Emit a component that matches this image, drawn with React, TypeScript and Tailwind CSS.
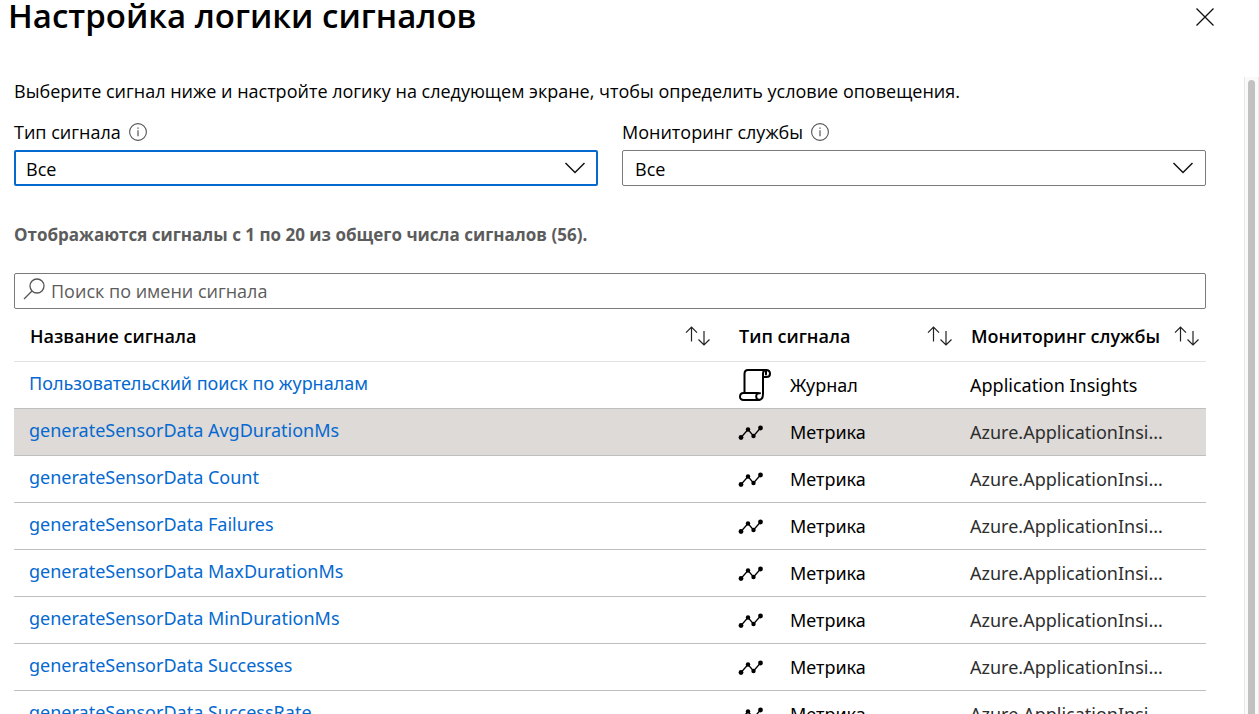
import { useState } from "react";

const signals = [
  { name: "Пользовательский поиск по журналам", type: "Журнал", service: "Application Insights" },
  { name: "generateSensorData AvgDurationMs", type: "Метрика", service: "Azure.ApplicationInsi..." },
  { name: "generateSensorData Count", type: "Метрика", service: "Azure.ApplicationInsi..." },
  { name: "generateSensorData Failures", type: "Метрика", service: "Azure.ApplicationInsi..." },
  { name: "generateSensorData MaxDurationMs", type: "Метрика", service: "Azure.ApplicationInsi..." },
  { name: "generateSensorData MinDurationMs", type: "Метрика", service: "Azure.ApplicationInsi..." },
  { name: "generateSensorData Successes", type: "Метрика", service: "Azure.ApplicationInsi..." },
  { name: "generateSensorData SuccessRate", type: "Метрика", service: "Azure.ApplicationInsi..." },
];

function InfoIcon() {
  return (
    <svg width="18" height="18" viewBox="0 0 18 18" fill="none" stroke="#555" aria-hidden="true">
      <circle cx="9" cy="9" r="8.4" strokeWidth="1.1" />
      <path d="M9 7.2v6" strokeWidth="1.2" />
      <path d="M9 4.4v1.4" strokeWidth="1.3" />
    </svg>
  );
}

function SortIcon() {
  return (
    <svg width="26" height="20" viewBox="0 0 26 20" fill="none" stroke="#222" strokeWidth="1.2" aria-hidden="true">
      <path d="M6.5 15.5V1.2M1 6.7l5.5-5.5L12 6.7" />
      <path d="M19 5v14M13.5 13.5L19 19l5.5-5.5" />
    </svg>
  );
}

function LogIcon() {
  return (
    <svg width="34" height="34" viewBox="0 0 34 34" fill="none" stroke="#000" strokeWidth="2" strokeLinecap="round" aria-hidden="true">
      <path d="M6.5 25V6c0-2.4 1.2-4 3.500-4H28" />
      <path d="M28 2c2.600 0 4 1.600 4 3.700S30.600 9 28.500 9H26" />
      <path d="M28 2c-1.800 0-3 1.300-3 3.500V26c0 3.600-1.600 6-4.500 6H5.500C3.200 32 2 30.600 2 28.700S3.200 25 5.500 25H20" />
      <path d="M22 25.200c-2.400-.4-3.800 1-3.800 3.200s1.300 3.600 3 3.400" />
      <path d="M28 3v3.500" />
    </svg>
  );
}

function MetricIcon() {
  return (
    <svg width="26" height="16" viewBox="0 0 26 16" aria-hidden="true">
      <path d="M3 13.5L10 5.5L15.5 12L22.5 4" fill="none" stroke="#000" strokeWidth="1.3" />
      <circle cx="3" cy="13.5" r="2.4" />
      <circle cx="10" cy="5.5" r="2.2" />
      <circle cx="15.5" cy="12" r="2.2" />
      <circle cx="22.5" cy="4" r="2.4" />
    </svg>
  );
}

function FilterSelect({ id, label, active }: { id: string; label: string; active?: boolean }) {
  return (
    <div className="min-w-0 flex-1">
      <div className="flex h-6 items-center gap-2">
        <label htmlFor={id} className="text-lg leading-6">
          {label}
        </label>
        <InfoIcon />
      </div>
      <div className="mt-1.5 grid items-center">
        <select
          id={id}
          className={
            active
              ? "col-start-1 row-start-1 h-9 w-full appearance-none rounded-xs border-2 border-[#0469d0] bg-white px-2.5 pt-0.5 text-lg leading-6 outline-none"
              : "col-start-1 row-start-1 h-9 w-full appearance-none rounded-xs border border-[#7a7a7a] bg-white px-3 pt-0.5 text-lg leading-6 outline-none"
          }
        >
          <option>Все</option>
        </select>
        <svg
          width="22"
          height="12"
          viewBox="0 0 22 12"
          fill="none"
          stroke="#111"
          strokeWidth="1.5"
          className="pointer-events-none col-start-1 row-start-1 mr-3 justify-self-end"
          aria-hidden="true"
        >
          <path d="M1.5 1L11 10.5L20.5 1" />
        </svg>
      </div>
    </div>
  );
}

export default function App() {
  const [query, setQuery] = useState("");
  const rows = signals.filter((s) => s.name.toLowerCase().includes(query.toLowerCase()));

  return (
    <div className="flex h-screen flex-col overflow-hidden bg-white font-['Open_Sans','Noto_Sans',sans-serif] text-black">
      <header className="flex h-[77px] shrink-0 items-start justify-between pr-[45px] pl-2">
        <h1 className="text-[33px] leading-8 font-semibold">Настройка логики сигналов</h1>
        <button type="button" aria-label="Закрыть" className="mt-2">
          <svg width="18" height="18" viewBox="0 0 18 18" fill="none" stroke="#111" strokeWidth="1.3">
            <path d="M.5.5l17 17M17.5.5l-17 17" />
          </svg>
        </button>
      </header>

      <div className="flex min-h-0 flex-1">
        <main className="min-w-0 flex-1 overflow-hidden pr-[38px] pl-3.5">
          <p className="pt-0.5 text-lg leading-6">
            Выберите сигнал ниже и настройте логику на следующем экране, чтобы определить условие оповещения.
          </p>

          <div className="mt-[17px] flex gap-6">
            <FilterSelect id="signal-type" label="Тип сигнала" active />
            <FilterSelect id="monitor-service" label="Мониторинг службы" />
          </div>

          <p className="mt-[37px] text-[17px] leading-6 font-bold text-[#5c5c5c]">
            Отображаются сигналы с 1 по 20 из общего числа сигналов (56).
          </p>

          <div className="mt-[26px] flex h-9 items-center gap-1.5 rounded-xs border border-[#7a7a7a] px-2">
            <svg width="22" height="22" viewBox="0 0 22 22" fill="none" stroke="#555" strokeWidth="1.3" className="mb-1" aria-hidden="true">
              <circle cx="14" cy="8" r="7" />
              <path d="M9 13L1 21" />
            </svg>
            <input
              type="text"
              aria-label="Поиск по имени сигнала"
              placeholder="Поиск по имени сигнала"
              value={query}
              onChange={(e) => setQuery(e.target.value)}
              className="min-w-0 flex-1 text-lg leading-6 outline-none placeholder:text-[#5c5c5c]"
            />
          </div>

          <table className="w-full table-fixed border-collapse text-left text-lg leading-6">
            <thead>
              <tr className="h-[52px] border-b border-[#e3e3e3]">
                <th className="pt-0.5 pr-3.5 pl-4 font-semibold">
                  <div className="flex items-center justify-between">
                    Название сигнала
                    <SortIcon />
                  </div>
                </th>
                <th className="w-[232px] pt-0.5 pr-1 pl-3.5 font-semibold">
                  <div className="flex items-center justify-between">
                    Тип сигнала
                    <SortIcon />
                  </div>
                </th>
                <th className="w-[249px] pt-0.5 pr-1.5 pl-3.5 font-semibold">
                  <div className="flex items-center justify-between whitespace-nowrap">
                    Мониторинг службы
                    <SortIcon />
                  </div>
                </th>
              </tr>
            </thead>
            <tbody className="font-['Noto_Sans','Open_Sans',sans-serif]">
              {rows.map((s, i) => (
                <tr
                  key={s.name}
                  className={i === 1 ? "h-[47px] border-b border-[#bfbfbf] bg-[#dedad7]" : "h-[47px] border-b border-[#bfbfbf]"}
                >
                  <td className="truncate pb-1 pl-[15px]">
                    <a href="#" className="text-[#0469d0]">
                      {s.name}
                    </a>
                  </td>
                  <td className="pl-[13px]">
                    <div className="flex items-center">
                      <span className="w-[52px]">{s.type === "Журнал" ? <LogIcon /> : <MetricIcon />}</span>
                      {s.type}
                    </div>
                  </td>
                  <td className={i === 0 ? "truncate pl-[13px]" : "truncate pl-[13px] text-[#2e2e2e]"}>{s.service}</td>
                </tr>
              ))}
            </tbody>
          </table>
        </main>

        <div className="w-[15px] shrink-0 border-x border-[#e8e8e8] bg-[#fafafa] px-[3px] pt-[3px]" aria-hidden="true">
          <div className="h-full rounded-t-full bg-[#c1c1c1]" />
        </div>
      </div>
    </div>
  );
}
